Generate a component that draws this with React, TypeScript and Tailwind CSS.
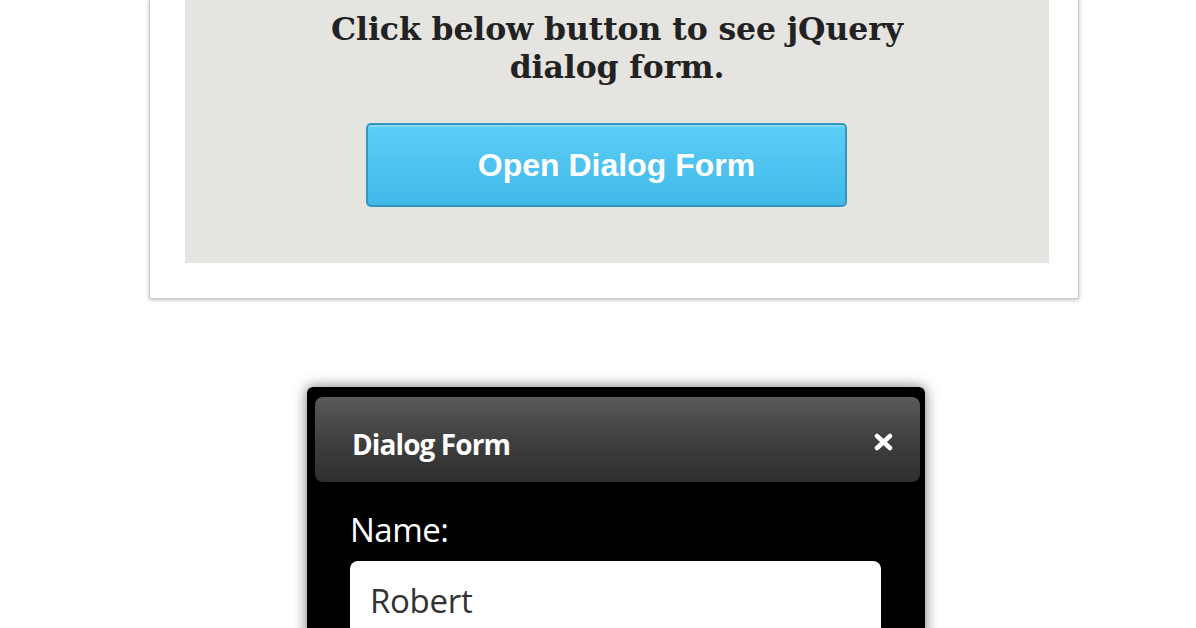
import { useState } from "react";

export default function App() {
  const [name, setName] = useState("Robert");

  return (
    <div className="w-[1196px] h-[628px] overflow-hidden bg-white relative">
      {/* top demo card */}
      <div className="ml-[149px] w-[930px] -mt-px border border-[#c9c9c9] border-t-0 bg-white pl-[35px] pr-[29px] pb-[35px] shadow-[0_1px_4px_rgba(0,0,0,0.25)]">
        <div className="bg-[#e5e4e0] pt-[11px] pb-[56px]">
          <h2
            className="text-center text-[31.5px] leading-[38px] font-bold text-[#222] mx-auto w-[660px] tracking-[-0.1px]"
            style={{ fontFamily: '"DejaVu Serif", "Liberation Serif", serif' }}
          >
            Click below button to see jQuery dialog form.
          </h2>
          <button
            className="mt-[37px] ml-[181px] w-[481px] h-[84px] rounded-[5px] border-2 border-[#3496bd] bg-gradient-to-b from-[#5ccdf6] to-[#40b9e9] shadow-[inset_0_2px_0_rgba(255,255,255,0.25)] pl-[20px] text-white text-[32px] font-bold flex items-center justify-center"
            style={{ fontFamily: '"Liberation Sans", Arial, sans-serif' }}
          >
            Open Dialog Form
          </button>
        </div>
      </div>

      {/* dialog */}
      <div
        className="ml-[307px] mt-[88px] w-[618px] h-[260px] bg-black rounded-t-[6px] pt-[10px] pl-[8px] pr-[5px] shadow-[0_0_14px_rgba(0,0,0,0.55)]"
        style={{ fontFamily: '"Open Sans", "Noto Sans", sans-serif' }}
      >
        <div className="h-[85px] rounded-[8px] bg-gradient-to-b from-[#5a5a5a] via-[#404040] to-[#2e2e2e] flex items-center justify-between pl-[37px] pr-[27px] pt-[8px]">
          <span className="text-white text-[28px] font-bold tracking-[-0.9px]">Dialog Form</span>
          <svg width="19" height="18" viewBox="0 0 19 18" className="-mt-[3px]">
            <path d="M3 3 L16 15 M16 3 L3 15" stroke="#fff" strokeWidth="4.5" strokeLinecap="round" />
          </svg>
        </div>
        <div className="pl-[35px] pr-[36px] pt-[26px]">
          <label className="block text-white text-[33px] leading-[44px] tracking-[-0.5px]">Name:</label>
          <input
            value={name}
            onChange={(e) => setName(e.target.value)}
            className="mt-[9px] w-[531px] h-[80px] rounded-[8px] bg-white px-[20px] pb-[2px] text-[33px] text-[#333] tracking-[-0.3px] outline-none"
          />
        </div>
      </div>
    </div>
  );
}
